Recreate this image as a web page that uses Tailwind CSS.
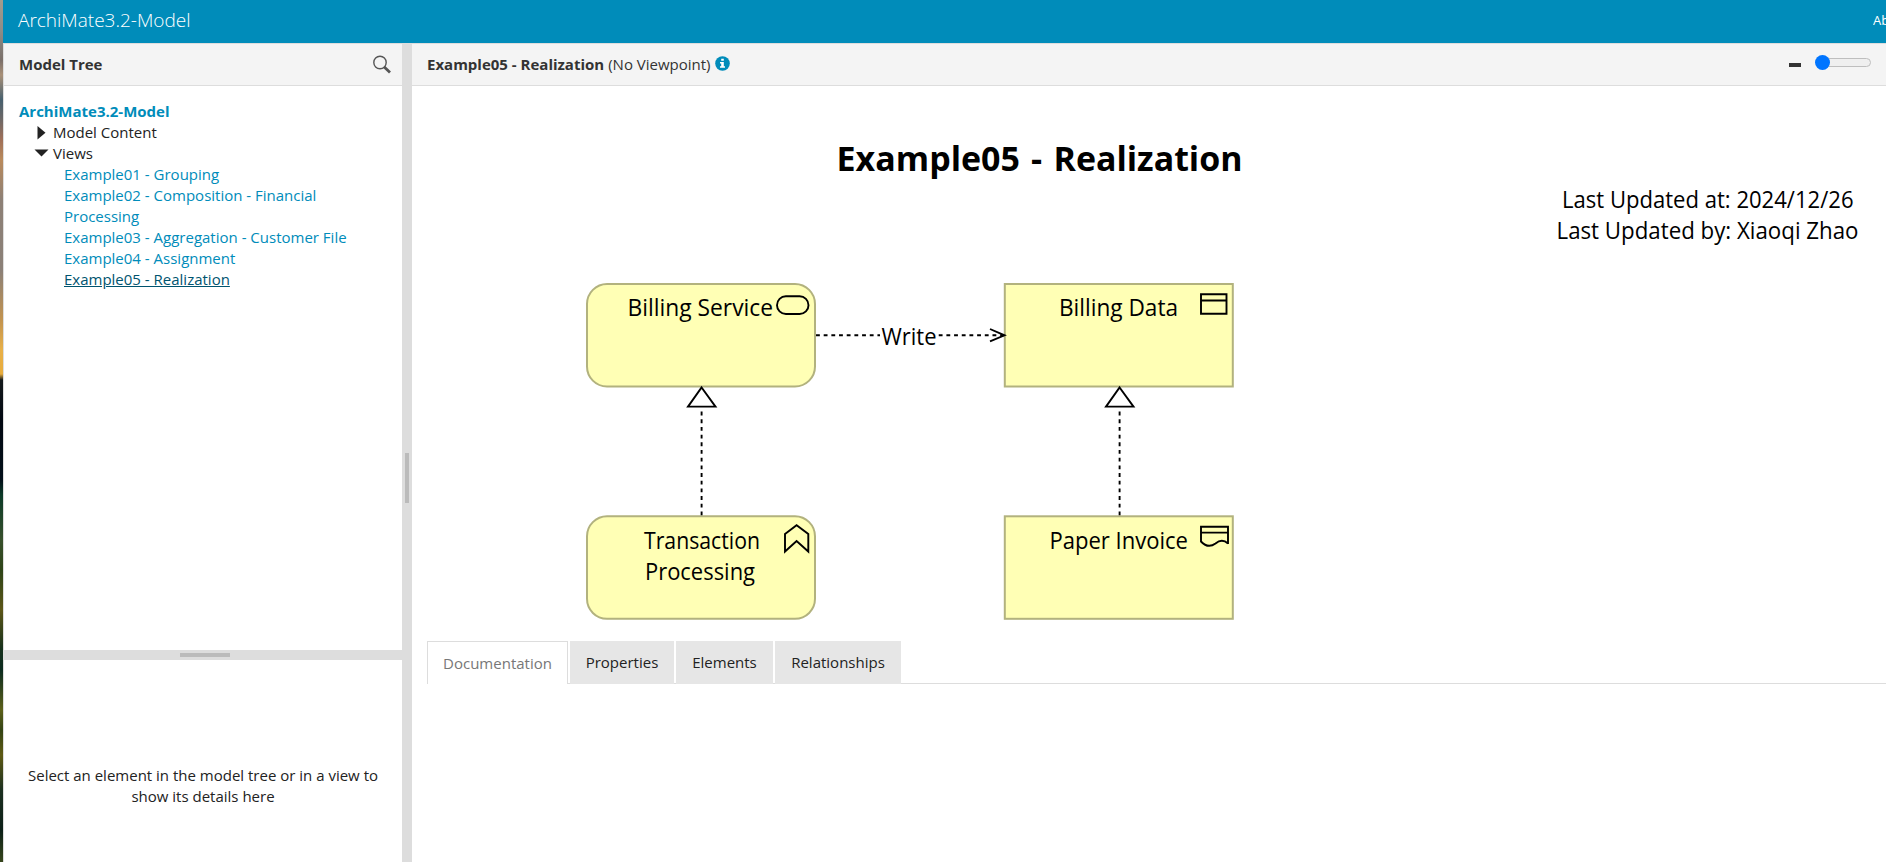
<!DOCTYPE html>
<html lang="en">
<head>
<meta charset="utf-8">
<title>ArchiMate3.2-Model</title>
<script src="https://cdn.jsdelivr.net/npm/@tailwindcss/browser@4"></script>
</head>
<body class="flex h-screen overflow-hidden bg-white font-['Open_Sans','Noto_Sans',sans-serif] text-[15px] leading-[21px] text-[#222]">
  <!-- Desktop strip left of the window -->
  <div class="w-[3px] shrink-0 bg-[linear-gradient(to_bottom,#a39c8d_0px,#8d8d88_30px,#7a6f69_60px,#a89078_75px,#47606e_100px,#6e6866_120px,#a07058_140px,#b98a5c_160px,#8d8076_200px,#8b8078_270px,#c2934f_320px,#e8b048_350px,#e8ac3c_374px,#141a1c_380px,#020812_420px,#03101a_480px,#0c3b28_495px,#37502c_540px,#2e4418_570px,#5c5618_610px,#14301c_650px,#0c2c20_670px,#5c601a_710px,#344414_730px,#5e5a14_755px,#1c3020_790px,#0c2018_830px,#37461c_862px)]"></div>

  <div class="flex min-w-0 grow flex-col">
    <header class="flex h-[43px] shrink-0 items-start justify-between bg-[#008cba] pl-[15px] text-white">
      <h1 class="pt-[6px] text-[19px] leading-[28px] font-light whitespace-nowrap">ArchiMate3.2-Model</h1>
      <a class="w-[13px] overflow-hidden pt-[10px] text-[13px] leading-[21px] whitespace-nowrap">About</a>
    </header>

    <div class="flex min-h-0 grow border-l border-[#ddd]">
      <!-- Left column -->
      <aside class="flex w-[398px] shrink-0 flex-col">
        <div class="flex h-[43px] shrink-0 items-center justify-between border-y border-[#ddd] bg-[#f4f4f4] pr-[11px] pl-[15px]">
          <span class="font-bold text-[#333]">Model Tree</span>
          <svg class="mb-px size-[19px]" viewBox="0 0 19 19" fill="none" stroke="#555"><circle cx="8" cy="7.5" r="6.2" stroke-width="1.4"/><path d="M12 11.7 18 17.4" stroke-width="2.8"/></svg>
        </div>
        <div class="h-[564px] shrink-0 pt-[15px] pl-[15px]">
          <div class="font-bold text-[#008cba]">ArchiMate3.2-Model</div>
          <div class="flex items-center pl-[15px]"><svg class="h-[14px] w-[19px]" viewBox="0 0 19 14"><path d="M3.500 0V13.500L11.500 6.750Z" fill="#222"/></svg>Model Content</div>
          <div class="flex items-center pl-[15px]"><svg class="h-[14px] w-[19px]" viewBox="0 0 19 14"><path d="M.5 2.500H14.500L7.500 9.500Z" fill="#222"/></svg>Views</div>
          <ul class="w-[340px] pl-[45px] text-[#008cba]">
            <li>Example01 - Grouping</li>
            <li>Example02 - Composition - Financial<br>Processing</li>
            <li class="whitespace-nowrap">Example03 - Aggregation - Customer File</li>
            <li>Example04 - Assignment</li>
            <li class="text-[#00546f] underline">Example05 - Realization</li>
          </ul>
        </div>
        <div class="flex h-[10px] shrink-0 items-start bg-[#ddd] pt-[3px] pl-[176px]"><div class="h-[4px] w-[50px] bg-[#bbb]"></div></div>
        <div class="flex grow items-center justify-center pt-[50px] text-center"><p>Select an element in the model tree or in a view to<br>show its details here</p></div>
      </aside>

      <div class="w-[10px] shrink-0 border-t border-[#ddd] bg-[#ddd] pt-[409px] pl-[3px]"><div class="h-[50px] w-[4px] bg-[#bbb]"></div></div>

      <!-- Main column -->
      <main class="flex min-w-0 grow flex-col">
        <div class="flex h-[43px] shrink-0 items-center border-y border-[#ddd] bg-[#f4f4f4] pl-[15px] text-[#333]">
          <b>Example05 - Realization</b><span class="ml-1">(No Viewpoint)</span>
          <svg class="mb-[2px] ml-[4px] size-[15px]" viewBox="0 0 15 15"><circle cx="7.500" cy="7.500" r="7.300" fill="#008cba"/><path d="M6.200 2.800h2.600v2H6.200zM5 6h3.800v4.300H10v1.500H5v-1.500h1.200V7.500H5z" fill="#fff"/></svg>
          <div class="mt-[1px] mr-[14px] ml-auto h-[4px] w-[12px] bg-[#333]"></div>
          <div class="mr-[15px] mb-[4px] flex h-[15px] w-[56px] items-center">
            <div class="z-10 size-[15px] shrink-0 rounded-full bg-[#0075ff]"></div>
            <div class="-ml-[13px] h-[9px] grow rounded-full border border-[#bebebe] bg-[#efefef]"></div>
          </div>
        </div>

        <svg class="h-[555px] w-[1474px] shrink-0 font-['Open_Sans','Noto_Sans',sans-serif] text-[23px]" viewBox="412 86 1474 555" fill="none">
          <g fill="#ffffb5" stroke="#b2b27e" stroke-width="2">
            <rect x="587" y="284" width="228" height="102.500" rx="20"/>
            <rect x="1004.800" y="284" width="228" height="102.500"/>
            <rect x="587" y="516.300" width="228" height="102.500" rx="20"/>
            <rect x="1004.800" y="516.300" width="228" height="102.500"/>
          </g>
          <g stroke="#000" stroke-width="1.900">
            <rect x="777" y="296.300" width="31.500" height="17.700" rx="8.850"/>
            <path d="M1201 294.300h25.500v19.500H1201zM1201 300.500h25.500"/>
            <path d="M785 534 796.600 525.300 808.300 534V551.500L796.600 541 785 551.500Z"/>
            <path d="M1228 544V526.800H1201V541.500Q1208 549 1215.500 543.500 Q1222 538 1228 543.500M1201 532.600h27"/>
            <path d="M816 335.300H880M1004 335.300H938" stroke-dasharray="3.840"/>
            <path d="M990 329 1004.500 335.300 990 341.400"/>
            <path d="M701.600 515.300V409M1119.600 515.300V409" stroke-dasharray="3.840"/>
            <path d="M701.600 387.500 715.500 406.600H688Z M1119.600 387.500 1133.500 406.600H1106Z" fill="#fff"/>
          </g>
          <g fill="#000">
            <g font-size="34.500" font-weight="700">
              <text x="836.500" y="170.600" textLength="183.500" lengthAdjust="spacingAndGlyphs">Example05</text>
              <text x="1031" y="170.600">-</text>
              <text x="1053.500" y="170.600" textLength="189" lengthAdjust="spacingAndGlyphs">Realization</text>
            </g>
            <text x="1562" y="208" textLength="291.500" lengthAdjust="spacingAndGlyphs">Last Updated at: 2024/12/26</text>
            <text x="1556.500" y="239" textLength="302" lengthAdjust="spacingAndGlyphs">Last Updated by: Xiaoqi Zhao</text>
            <text x="627.500" y="316.300" textLength="145.500" lengthAdjust="spacingAndGlyphs">Billing Service</text>
            <text x="881.500" y="345.300" textLength="55" lengthAdjust="spacingAndGlyphs">Write</text>
            <text x="1059" y="316.300" textLength="119" lengthAdjust="spacingAndGlyphs">Billing Data</text>
            <text x="644" y="548.600" textLength="116" lengthAdjust="spacingAndGlyphs">Transaction</text>
            <text x="645" y="579.600" textLength="110" lengthAdjust="spacingAndGlyphs">Processing</text>
            <text x="1049.500" y="548.600" textLength="138.500" lengthAdjust="spacingAndGlyphs">Paper Invoice</text>
          </g>
        </svg>

        <div class="ml-[15px] flex h-[43px] shrink-0 border-b border-[#ddd]">
          <div class="-mb-px mr-[2px] flex w-[141px] items-center justify-center border border-b-0 border-[#ddd] bg-white text-[#777]">Documentation</div>
          <div class="-mb-px mr-[2px] flex w-[104px] items-center justify-center bg-[#e6e6e6]">Properties</div>
          <div class="-mb-px mr-[2px] flex w-[97px] items-center justify-center bg-[#e6e6e6]">Elements</div>
          <div class="-mb-px flex w-[126px] items-center justify-center bg-[#e6e6e6]">Relationships</div>
        </div>
      </main>
    </div>
  </div>
</body>
</html>
